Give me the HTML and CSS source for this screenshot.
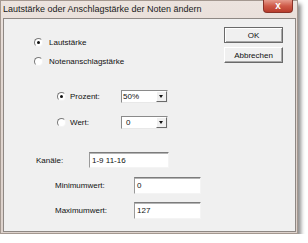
FILE: index.html
```html
<!DOCTYPE html>
<html lang="de">
<head>
    <meta charset="UTF-8">
    <meta name="viewport" content="width=device-width, initial-scale=1.0">
    <title>Lautstärke oder Anschlagstärke der Noten ändern</title>
    <link rel="stylesheet" href="styles.css">
</head>
<body>

    <!-- Dialogfenster -->
    <div class="window">
        <div class="titlebar">
            <span class="title">Lautstärke oder Anschlagstärke der Noten ändern</span>
            <span class="close">x</span>
        </div>

        <div class="client">
            <!-- Linke Seite: Optionen und Felder -->
            <div class="options">
                <div class="opt row1"><span class="radio checked"></span>Lautstärke</div>
                <div class="opt row2"><span class="radio"></span>Notenanschlagstärke</div>

                <div class="opt sub row3">
                    <span class="radio checked"></span>
                    <span class="label">Prozent:</span>
                    <span class="combo"><span class="value">50%</span><span class="drop"></span></span>
                </div>
                <div class="opt sub row4">
                    <span class="radio"></span>
                    <span class="label">Wert:</span>
                    <span class="combo"><span class="value pad">0</span><span class="drop"></span></span>
                </div>

                <div class="field channels">
                    <span class="label">Kanäle:</span>
                    <span class="edit">1-9 11-16</span>
                </div>
                <div class="field range row6">
                    <span class="label">Minimumwert:</span>
                    <span class="edit">0</span>
                </div>
                <div class="field range row7">
                    <span class="label">Maximumwert:</span>
                    <span class="edit">127</span>
                </div>
            </div>

            <!-- Rechte Seite: Knöpfe -->
            <div class="actions">
                <div class="button default">OK</div>
                <div class="button">Abbrechen</div>
            </div>
        </div>
    </div>

</body>
</html>
```

FILE: styles.css
```css
* {
    padding: 0;
    margin: 0;
    box-sizing: border-box;
}

body {
    background-color: #ffffff;
    font-family: "Liberation Sans", Arial, sans-serif;
    font-size: 8px;
    color: #111111;
}

/* Fensterrahmen */
.window {
    width: 298px;
    height: 234px;
    display: flex;
    flex-direction: column;
    background: linear-gradient(#ece3de, #e3d8d2 30%, #ddd2cc);
    border: 1px solid #a49890;
    box-shadow: 3px 4px 4px rgba(0, 0, 0, 0.45);
}

.titlebar {
    height: 17px;
    display: flex;
    justify-content: space-between;
    align-items: flex-start;
}

.title {
    font-size: 9px;
    line-height: 15px;
    padding-left: 2px;
    padding-top: 1px;
    color: #1a1a1a;
}

.close {
    width: 30px;
    height: 13px;
    margin-right: 4px;
    margin-top: -1px;
    border: 1px solid #8a3228;
    border-top: none;
    border-radius: 0 0 4px 4px;
    background: linear-gradient(#e59b8c, #cf5a48 50%, #b83c2c);
    color: #ffffff;
    font-weight: bold;
    font-size: 10px;
    line-height: 11px;
    text-align: center;
}

/* Innenbereich */
.client {
    flex: 1;
    margin: 0 1px 1px 2px;
    display: flex;
    background-color: #f0f0f0;
    border: 1px solid #8e8884;
}

.options {
    flex: 1;
}

.opt {
    display: flex;
    align-items: center;
    height: 13px;
    padding-left: 30px;
}

.row1 { margin-top: 17px; }
.row2 { margin-top: 6px; }
.row3 { margin-top: 22px; }
.row4 { margin-top: 13px; }

.opt.sub {
    padding-left: 53px;
}

.radio {
    position: relative;
    width: 9px;
    height: 9px;
    margin-right: 6px;
    border-radius: 50%;
    border: 1px solid;
    border-color: #7a7a7a #f4f4f4 #f4f4f4 #7a7a7a;
    background-color: #ffffff;
}

.sub .radio {
    margin-right: 4px;
}

.radio.checked::after {
    content: "";
    position: absolute;
    left: 2px;
    top: 2px;
    width: 3px;
    height: 3px;
    border-radius: 50%;
    background-color: #111111;
}

.sub .label {
    width: 51px;
}

/* Kombinationsfeld */
.combo {
    width: 47px;
    height: 13px;
    display: flex;
    background-color: #ffffff;
    border: 1px solid;
    border-color: #8a8a8a #e8e8e8 #e8e8e8 #8a8a8a;
}

.combo .value {
    flex: 1;
    padding-left: 1px;
    line-height: 11px;
}

.combo .value.pad {
    padding-left: 4px;
}

.drop {
    position: relative;
    width: 11px;
    background-color: #f0f0f0;
    border: 1px solid;
    border-color: #ffffff #6a6a6a #6a6a6a #ffffff;
}

.drop::after {
    content: "";
    position: absolute;
    left: 2px;
    top: 3px;
    border-left: 2.5px solid transparent;
    border-right: 2.5px solid transparent;
    border-top: 3px solid #111111;
}

/* Textfelder */
.field {
    display: flex;
    align-items: center;
}

.edit {
    display: flex;
    align-items: center;
    padding-left: 2px;
    background-color: #ffffff;
    border: 1px solid;
    border-color: #7c7c7c #f4f4f4 #f4f4f4 #9a9a9a;
    box-shadow: inset 0 1px #b4b4b4;
}

.channels {
    margin-top: 23px;
    padding-left: 32px;
}

.channels .label {
    width: 53px;
}

.channels .edit {
    width: 80px;
    height: 16px;
}

.range {
    padding-left: 51px;
}

.row6 { margin-top: 9px; }
.row7 { margin-top: 8px; }

.range .label {
    width: 79px;
}

.range .edit {
    width: 67px;
    height: 17px;
}

/* Knöpfe */
.actions {
    width: 59px;
    margin-top: 8px;
    margin-right: 12px;
    display: flex;
    flex-direction: column;
    gap: 4px;
}

.button {
    height: 16px;
    display: flex;
    align-items: center;
    justify-content: center;
    background-color: #f0f0f0;
    border: 1px solid;
    border-color: #ffffff #6a6a6a #6a6a6a #ffffff;
    box-shadow: inset -1px -1px #a8a8a8;
}

.button.default {
    border-color: #6a6a6a;
    box-shadow: inset 1px 1px #ffffff, inset -1px -1px #a8a8a8;
}
```
